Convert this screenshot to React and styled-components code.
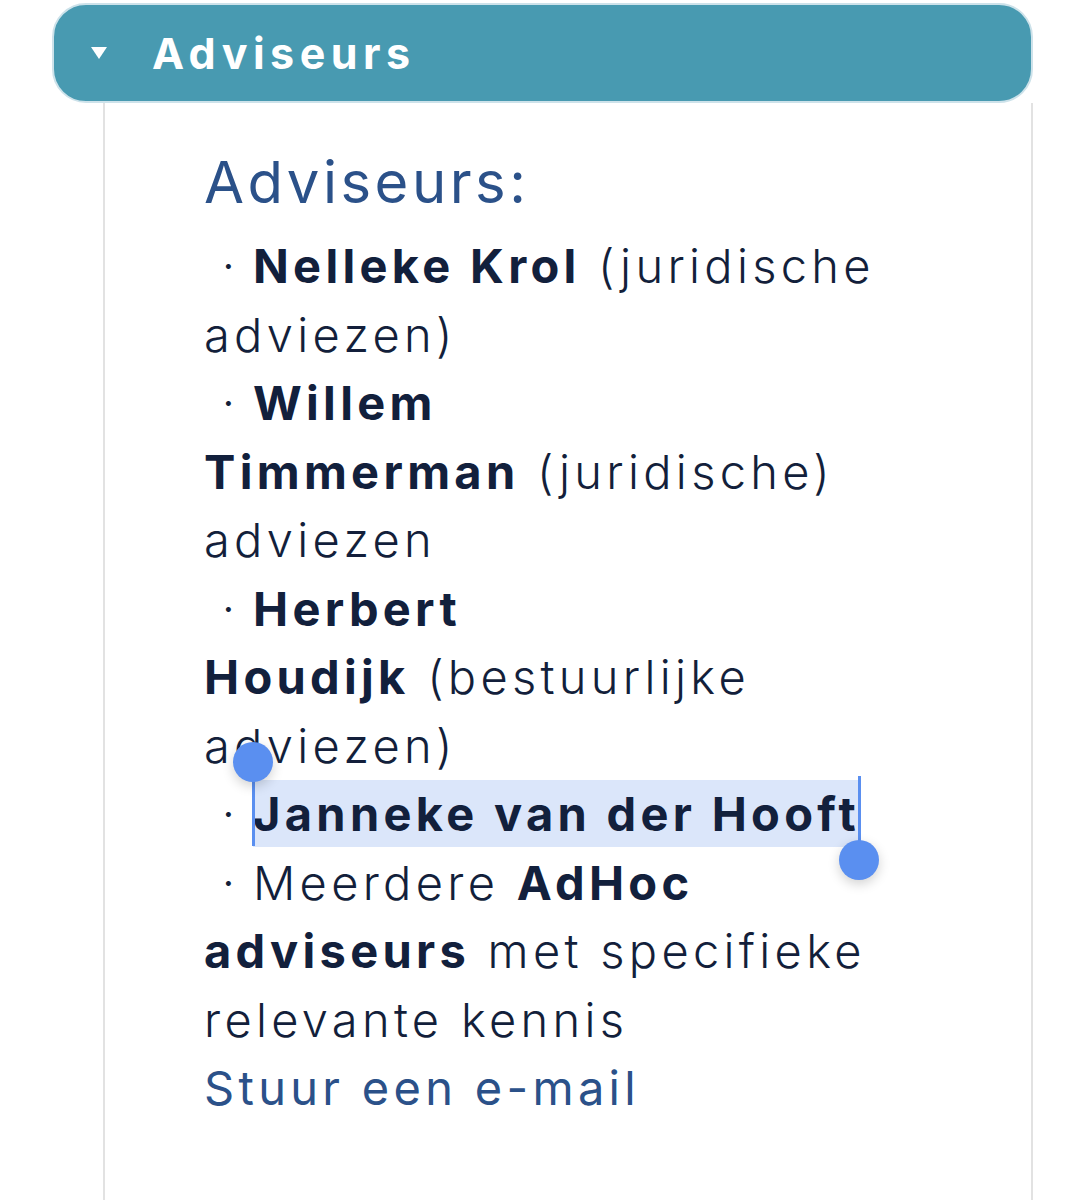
import React from "react";
import styled, { createGlobalStyle } from "styled-components";

const GlobalStyle = createGlobalStyle`
  html, body {
    margin: 0;
    padding: 0;
    background: #ffffff;
  }
  body {
    font-family: Inter, "Noto Sans", "Liberation Sans", sans-serif;
    -webkit-font-smoothing: antialiased;
  }
`;

const Page = styled.div`
  padding: 3px 51px 0 52px;
`;

const Header = styled.div`
  height: 100px;
  box-sizing: border-box;
  border: 2px solid #cde2ea;
  border-radius: 34px;
  background: #489ab1;
  display: flex;
  align-items: center;
  padding-left: 36px;
  gap: 44px;
`;

const HeaderTitle = styled.h1`
  margin: 0;
  color: #ffffff;
  font-size: 43px;
  font-weight: 700;
  letter-spacing: 5.5px;
`;

const Panel = styled.div`
  margin-left: 51px;
  border-left: 2px solid #e2e2e2;
  border-right: 2px solid #e2e2e2;
  min-height: 1100px;
  padding: 44px 0 0 99px;
`;

const Title = styled.h2`
  margin: 0 0 15px 0;
  color: #2b5189;
  font-size: 58px;
  font-weight: 400;
  letter-spacing: 3.5px;
  line-height: 70px;
`;

const Body = styled.div`
  color: #131f3b;
  font-size: 47px;
  font-weight: 300;
  letter-spacing: 4.3px;
  line-height: 68.5px;
  white-space: nowrap;

  b {
    font-weight: 700;
    color: #12203c;
  }
`;

const Dot = styled.span`
  display: inline-block;
  width: 49px;
  text-align: center;
  letter-spacing: 0;
`;

const Selected = styled.span`
  position: relative;
  background: #dbe6fa;
  padding: 5px 0 5px 0;
`;

const Handle = styled.span`
  position: absolute;
  width: 3px;
  background: #5a8ff0;
  ${(p) =>
    p.$end
      ? `right: -1px; top: -4px; height: 84px;`
      : `left: -1px; top: -18px; height: 84px;`}

  &::after {
    content: "";
    position: absolute;
    left: -19px;
    width: 40px;
    height: 40px;
    border-radius: 50%;
    background: #5a8ff0;
    box-shadow: 0 4px 12px rgba(0, 0, 0, 0.18);
    ${(p) => (p.$end ? `bottom: -20px;` : `top: -20px;`)}
  }
`;

const MailLink = styled.a`
  color: #2b5189;
  font-weight: 400;
  text-decoration: none;
`;

const Caret = () => (
  <svg width="18" height="14" viewBox="0 0 18 14">
    <path d="M1 1h16L9 13z" fill="#ffffff" />
  </svg>
);

export default function App() {
  return (
    <Page>
      <GlobalStyle />
      <Header>
        <Caret />
        <HeaderTitle>Adviseurs</HeaderTitle>
      </Header>
      <Panel>
        <Title>Adviseurs:</Title>
        <Body>
          <Dot>·</Dot><b>Nelleke Krol</b> (juridische
          <br />
          adviezen)
          <br />
          <Dot>·</Dot><b>Willem</b>
          <br />
          <b>Timmerman</b> (juridische)
          <br />
          adviezen
          <br />
          <Dot>·</Dot><b>Herbert</b>
          <br />
          <b>Houdijk</b> (bestuurlijke
          <br />
          adviezen)
          <br />
          <Dot>·</Dot>
          <Selected>
            <Handle />
            <b>Janneke van der Hooft</b>
            <Handle $end />
          </Selected>
          <br />
          <Dot>·</Dot>Meerdere <b>AdHoc</b>
          <br />
          <b>adviseurs</b> met specifieke
          <br />
          relevante kennis
          <br />
          <MailLink href="#">Stuur een e-mail</MailLink>
        </Body>
      </Panel>
    </Page>
  );
}
